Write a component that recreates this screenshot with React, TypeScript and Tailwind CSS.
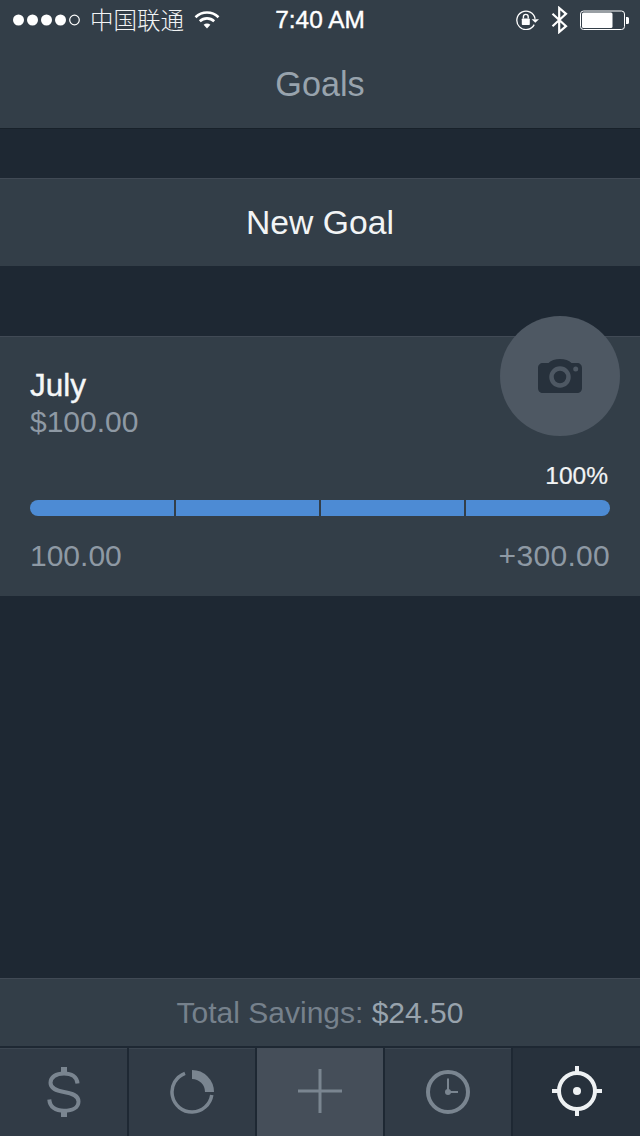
import React from "react";

const sans = "font-['Liberation_Sans','Helvetica_Neue',Arial,sans-serif]";

function Signal() {
  return (
    <svg width="68" height="12" viewBox="0 0 68 12" fill="#fff">
      <circle cx="5.5" cy="6" r="5.5" />
      <circle cx="19.5" cy="6" r="5.5" />
      <circle cx="33.5" cy="6" r="5.5" />
      <circle cx="47.5" cy="6" r="5.5" />
      <circle cx="61.5" cy="6" r="4.8" fill="none" stroke="#fff" strokeWidth="1.2" />
    </svg>
  );
}

function Wifi() {
  return (
    <svg width="26" height="20" viewBox="0 0 26 20" fill="none" stroke="#fff" strokeWidth="2.6">
      <path d="M1.5 7.2C8 1 18 1 24.5 7.2" />
      <path d="M5.8 11.3C10 7.4 16 7.4 20.2 11.3" />
      <path d="M9.6 14.8L13 18.6L16.4 14.8C14.4 13 11.6 13 9.6 14.8Z" fill="#fff" stroke="none" />
    </svg>
  );
}

function RotationLock() {
  return (
    <svg width="24" height="20" viewBox="0 0 24 20" fill="none">
      <path d="M18.2 14.6A9.2 9.2 0 1 1 19.1 8.8" stroke="#fff" strokeWidth="1.3" />
      <path d="M15.6 9.2H23L19.3 12.8Z" fill="#fff" />
      <rect x="5.8" y="8.4" width="8" height="6.6" rx="0.8" fill="#fff" />
      <path d="M7.4 8.6V6.8A2.4 2.4 0 0 1 12.2 6.8V8.6" stroke="#fff" strokeWidth="1.4" />
    </svg>
  );
}

function Bluetooth() {
  return (
    <svg width="17" height="28" viewBox="0 0 17 28" fill="none" stroke="#fff" strokeWidth="2.2">
      <path d="M1.5 7.8L15 20.2L8.2 26V2L15 7.8L1.5 20.2" />
    </svg>
  );
}

function Battery() {
  return (
    <svg width="49" height="20" viewBox="0 0 49 20" fill="none">
      <rect x="0.5" y="1" width="44" height="18.5" rx="3" stroke="#fff" strokeWidth="1" />
      <rect x="2" y="2.5" width="30.5" height="15.5" rx="1.5" fill="#fff" />
      <path d="M46 7H47.5A1.5 1.5 0 0 1 49 8.5V12.500A1.5 1.5 0 0 1 47.5 14H46Z" fill="#fff" />
    </svg>
  );
}

function Camera() {
  return (
    <svg width="44" height="34" viewBox="0 0 44 34" aria-hidden="true">
      <path
        d="M5 4H10.500C13 1.500 17 0 22 0C27 0 31 1.500 33.500 4H39C42 4 44 6 44 9V29C44 32 42 34 39 34H5C2 34 0 32 0 29V9C0 6 2 4 5 4Z"
        fill="#27313c"
      />
      <circle cx="22" cy="18" r="8.500" fill="none" stroke="#4e5863" strokeWidth="4.500" />
      <circle cx="37.700" cy="10" r="2.500" fill="#4e5863" />
    </svg>
  );
}

function DollarIcon() {
  return (
    <svg width="34" height="50" viewBox="0 0 34 50" fill="none" stroke="#7a8590" strokeWidth="4">
      <path d="M30.500 16.500C30 9.800 24.500 6.500 17 6.500C9 6.500 3.500 10 3.500 15.800C3.500 21.500 9 23.500 17 25C25.500 26.500 31.500 28.500 31.500 34.500C31.500 40.500 25.500 43.800 17 43.800C8.500 43.800 2.800 40 2.300 32.500" />
      <path d="M17 0V7M17 43V50" strokeWidth="6" />
    </svg>
  );
}

function DonutIcon() {
  return (
    <svg width="44" height="44" viewBox="0 0 44 44" fill="none">
      <path d="M15 3.270A20 20 0 1 0 41.770 25" stroke="#7a8590" strokeWidth="3.500" />
      <path d="M22 4.500A17.500 17.500 0 0 1 39.500 22" stroke="#7a8590" strokeWidth="9" />
    </svg>
  );
}

function PlusIcon() {
  return (
    <svg width="44" height="44" viewBox="0 0 44 44" stroke="#7a8590" strokeWidth="3">
      <path d="M22 0V44M0 22H44" />
    </svg>
  );
}

function ClockIcon() {
  return (
    <svg width="44" height="44" viewBox="0 0 44 44" fill="none" stroke="#7a8590">
      <circle cx="22" cy="22" r="20" strokeWidth="4" />
      <path d="M22 8.500V22H32" strokeWidth="2" />
      <circle cx="22" cy="22" r="3" fill="#7a8590" stroke="none" />
    </svg>
  );
}

function TargetIcon() {
  return (
    <svg width="50" height="50" viewBox="0 0 50 50" fill="none" stroke="#eef1f3">
      <circle cx="25" cy="25" r="18" strokeWidth="4" />
      <path d="M25 0V6M25 44V50M0 25H6M44 25H50" strokeWidth="4" />
      <circle cx="25" cy="25" r="4" fill="#eef1f3" stroke="none" />
    </svg>
  );
}

function Tab({ children, className }: { children: React.ReactNode; className: string }) {
  return <div className={`flex h-full items-center justify-center pb-[2px] ${className}`}>{children}</div>;
}

function ProgressBar() {
  return (
    <div className="mt-[10px] grid h-4 grid-cols-[144px_143px_143px_144px] gap-[2px] overflow-hidden rounded-lg">
      <div className="bg-[#4d8bd4]" />
      <div className="bg-[#4d8bd4]" />
      <div className="bg-[#4d8bd4]" />
      <div className="bg-[#4d8bd4]" />
    </div>
  );
}

export default function App() {
  return (
    <div className={`${sans} flex h-[1136px] w-[640px] flex-col overflow-hidden bg-[#1e2833]`}>
      <header className="h-[129px] shrink-0 border-b-[1px] border-[#18212a] bg-[#333e48]">
        <div className="flex h-10 items-center px-[13px] text-white">
          <div className="flex flex-1 items-center">
            <Signal />
            <span className="ml-[9px] font-['Noto_Sans_CJK_SC',sans-serif] text-[23.500px] leading-none font-light text-[#f2f4f5]">
              中国联通
            </span>
            <span className="ml-[10px]">
              <Wifi />
            </span>
          </div>
          <span className="text-[24.400px] leading-none [-webkit-text-stroke:0.4px_white]">7:40 AM</span>
          <div className="flex flex-1 items-center justify-end gap-[11px]">
            <RotationLock />
            <Bluetooth />
            <span className="-mr-[2px] ml-[1px]">
              <Battery />
            </span>
          </div>
        </div>
        <h1 className="mt-[24px] text-center text-[34.200px] leading-10 font-normal text-[#98a3ad]">Goals</h1>
      </header>

      <button className="mt-[49px] flex h-[88px] shrink-0 items-center justify-center border-t border-[#414a55] bg-[#333e48] text-[33.700px] text-[#f2f4f5]">
        New Goal
      </button>

      <section className="relative mt-[70px] h-[260px] shrink-0 border-t border-[#414a55] bg-[#333e48] px-[30px] pt-[31px]">
        <div className="absolute -top-[21px] right-[20px] flex h-[120px] w-[120px] items-center justify-center rounded-full bg-[#4e5863]">
          <Camera />
        </div>
        <div className="text-[31.500px] leading-[34px] text-[#f5f7f8] [-webkit-text-stroke:0.4px_#f5f7f8]">July</div>
        <div className="text-[30px] leading-[39px] text-[#8e99a4]">$100.00</div>
        <div className="mt-[21px] pr-[2px] text-right text-[24.500px] leading-7 text-[#f2f4f5] [-webkit-text-stroke:0.2px_#f2f4f5]">100%</div>
        <ProgressBar />
        <div className="mt-[22px] flex justify-between text-[30px] leading-9 text-[#8e99a4]">
          <span>100.00</span>
          <span className="tracking-[0.3px]">+300.00</span>
        </div>
      </section>

      <div className="flex-1" />

      <div className="flex h-[68px] shrink-0 items-center justify-center border-t border-[#414a55] bg-[#333e48] text-[30px] text-[#76818c]">
        <span>
          Total Savings: <span className="text-[#98a3ad]">$24.50</span>
        </span>
      </div>

      <nav className="grid h-[90px] shrink-0 grid-cols-[127px_126px_126px_126px_127px] gap-x-[2px] border-t-2 border-[#1e2833] bg-[#1e2833]">
        <Tab className="border-t border-[#3c4651] bg-[#313b46]">
          <DollarIcon />
        </Tab>
        <Tab className="border-t border-[#3c4651] bg-[#313b46]">
          <DonutIcon />
        </Tab>
        <Tab className="bg-[#454e59]">
          <PlusIcon />
        </Tab>
        <Tab className="border-t border-[#3c4651] bg-[#313b46]">
          <ClockIcon />
        </Tab>
        <Tab className="bg-[#27313c]">
          <TargetIcon />
        </Tab>
      </nav>
    </div>
  );
}
